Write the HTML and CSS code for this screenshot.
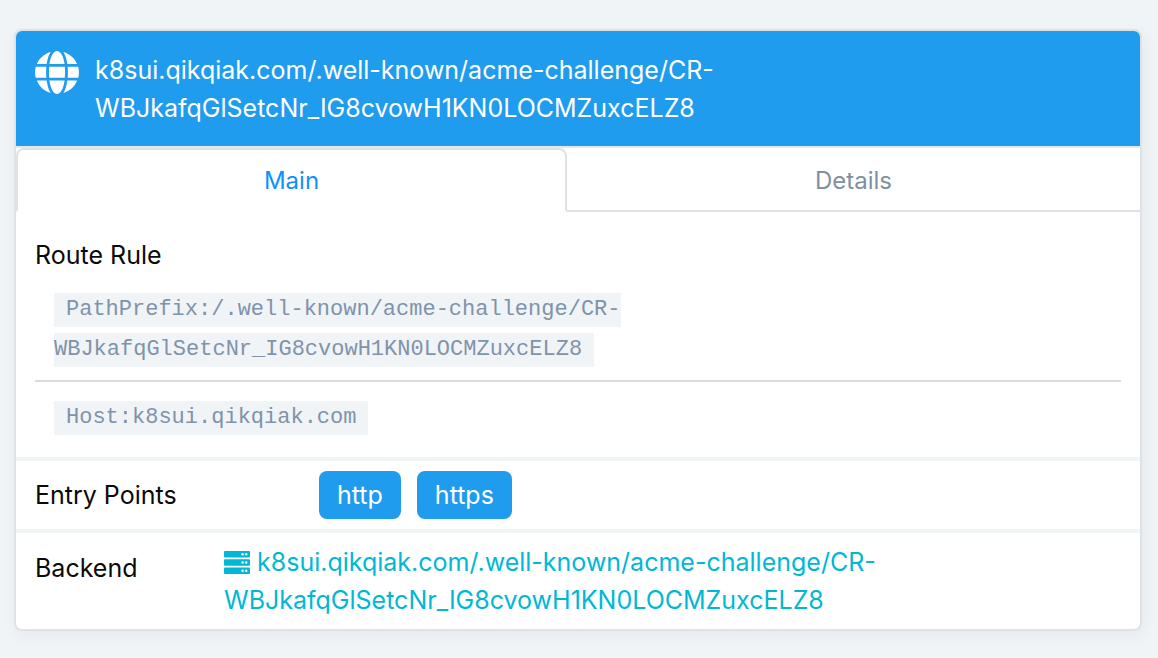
FILE: index.html
```
<!DOCTYPE html>
<html lang="en">
<head>
<meta charset="utf-8">
<meta name="viewport" content="width=device-width, initial-scale=1">
<title>Frontend</title>
<link rel="stylesheet" href="styles.css">
</head>
<body>
<article class="card">
  <header class="card-header">
    <svg class="globe" viewBox="0 0 44 44" aria-hidden="true">
      <g fill="currentColor">
        <path d="M14.400 13C15.600 5 18.500 0 22 0S28.400 5 29.600 13z"/>
        <path d="M14.200 15.800H29.800C30.200 19.500 30.200 23.300 29.800 26.800H14.200C13.800 23.300 13.800 19.500 14.200 15.800z"/>
        <path d="M14.400 29.600H29.600C28.400 38 25.500 43 22 43S15.600 38 14.400 29.600z"/>
        <path d="M15.600 1C9 3 4.200 7.400 1.900 13H11.700C12.400 8 13.600 4 15.600 1z"/>
        <path d="M28.400 1C35 3 39.800 7.400 42.100 13H32.300C31.600 8 30.400 4 28.400 1z"/>
        <path d="M.8 15.800H11.400C11 19.500 11 23.300 11.400 26.800H.8C-.2 23.300-.2 19.500.8 15.800z"/>
        <path d="M43.200 15.800H32.600C33 19.500 33 23.300 32.600 26.800H43.200C44.200 23.300 44.200 19.500 43.200 15.800z"/>
        <path d="M1.900 29.600H11.700C12.400 35 13.600 39 15.600 42C9 40 4.200 35.600 1.900 29.600z"/>
        <path d="M42.100 29.600H32.300C31.600 35 30.400 39 28.400 42C35 40 39.800 35.600 42.100 29.600z"/>
      </g>
    </svg>
    <h1 class="title">k8sui.qikqiak.com/.well-known/acme-challenge/CR-<wbr>WBJkafqGlSetcNr_IG8cvowH1KN0LOCMZuxcELZ8</h1>
  </header>
  <div class="tabs" role="tablist">
    <button class="tab is-active" type="button" role="tab" aria-selected="true">Main</button>
    <button class="tab" type="button" role="tab" aria-selected="false">Details</button>
  </div>
  <section class="section rules">
    <h2 class="label">Route Rule</h2>
    <div class="rule"><code class="code">PathPrefix:/.well-known/acme-challenge/CR-<wbr>WBJkafqGlSetcNr_IG8cvowH1KN0LOCMZuxcELZ8</code></div>
    <hr class="divider">
    <div class="rule"><code class="code">Host:k8sui.qikqiak.com</code></div>
  </section>
  <section class="section entry">
    <h2 class="label entry-label">Entry Points</h2>
    <div class="tags"><span class="tag">http</span><span class="tag">https</span></div>
  </section>
  <section class="section backend">
    <h2 class="label backend-label">Backend</h2>
    <a class="link" href="#backend"><svg class="server" viewBox="0 0 26 23" aria-hidden="true"><g fill="currentColor"><rect width="26" height="6.600" rx="1"/><rect y="8.200" width="26" height="6.600" rx="1"/><rect y="16.400" width="26" height="6.600" rx="1"/></g><g fill="#fff"><circle cx="18.600" cy="3.300" r="1.200"/><circle cx="22.200" cy="3.300" r="1.200"/><circle cx="18.600" cy="11.500" r="1.200"/><circle cx="22.200" cy="11.500" r="1.200"/><circle cx="18.600" cy="19.700" r="1.200"/><circle cx="22.200" cy="19.700" r="1.200"/></g></svg>k8sui.qikqiak.com/.well-known/acme-challenge/CR-<wbr>WBJkafqGlSetcNr_IG8cvowH1KN0LOCMZuxcELZ8</a>
  </section>
</article>
</body>
</html>
```
FILE: styles.css
```
* {
  box-sizing: border-box;
}

body {
  margin: 0;
  padding: 29px 16px 26px 14px;
  background: #f0f4f7;
  color: #0a0a0a;
  font: 400 25px/38px Inter, "Liberation Sans", sans-serif;
}

.card {
  overflow: hidden;
  border: 2px solid #dee2e6;
  border-radius: 8px;
  background: #fff;
  box-shadow: 2px 4px 16px rgba(10, 20, 30, 0.05);
}

.card-header {
  display: flex;
  align-items: flex-start;
  gap: 16px;
  padding: 20px 19px 19px;
  background: #209cee;
  color: #fff;
}

.globe {
  flex: none;
  width: 44px;
  height: 44px;
}

.title,
.label {
  margin: 0;
  font-size: 25px;
  font-weight: 400;
}

.title,
.link {
  min-width: 0;
  overflow-wrap: anywhere;
}

.tabs {
  display: flex;
  border-top: 2px solid #e4e8ec;
}

.tab {
  flex: 1 1 auto;
  height: 64px;
  padding: 4px 24px 0;
  border: 0;
  border-bottom: 2px solid #dee2e6;
  background: none;
  color: #7f8fa4;
  font: inherit;
  font-size: 24px;
  cursor: pointer;
}

.tab.is-active {
  padding: 2px 22px 0;
  border: 2px solid #dee2e6;
  border-bottom-color: transparent;
  border-radius: 8px 8px 0 0;
  color: #0d92fb;
}

.section {
  padding: 10px 19px;
}

.section + .section {
  border-top: 4px solid #f0f4f7;
}

.rules {
  padding: 24px 19px 19px;
}

.rules .label {
  margin-bottom: 16px;
}

.rule {
  padding: 0 19px;
  font: 22px/40px "Liberation Mono", monospace;
}

.code {
  padding: 4px 12px 5px;
  background: #f0f4f7;
  color: #7f93aa;
  font: inherit;
}

.divider {
  height: 2px;
  margin: 10px 0 16px;
  border: 0;
  background: #dbdbdb;
}

.entry,
.backend {
  display: flex;
  align-items: flex-start;
}

.entry {
  align-items: center;
}

.entry-label {
  flex: 0 0 284px;
}

.backend-label {
  flex: 0 0 189px;
  padding-top: 6px;
}

.tags {
  display: flex;
  flex-wrap: wrap;
  gap: 16px;
}

.tag {
  padding: 5px 18px;
  border-radius: 8px;
  background: #209cee;
  color: #fff;
}

.link {
  color: #00b8d4;
  text-decoration: none;
}

.server {
  width: 26px;
  height: 23px;
  margin-right: 7px;
  vertical-align: -3px;
}
```
